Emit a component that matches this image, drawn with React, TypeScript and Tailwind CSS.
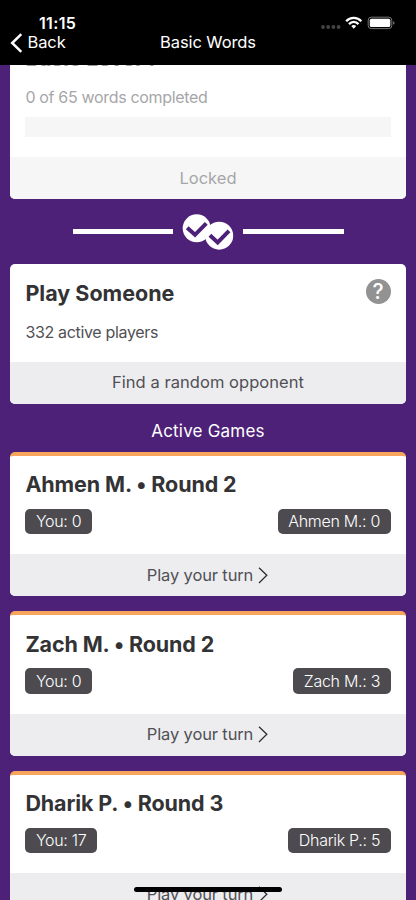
import React from 'react';

interface Game {
  opponent: string;
  round: number;
  yourScore: number;
  theirScore: number;
}

const games: Game[] = [
  { opponent: 'Ahmen M.', round: 2, yourScore: 0, theirScore: 0 },
  { opponent: 'Zach M.', round: 2, yourScore: 0, theirScore: 3 },
  { opponent: 'Dharik P.', round: 3, yourScore: 17, theirScore: 5 },
];

const StatusIcons = () => (
  <svg width="76" height="16" viewBox="0 0 76 16" className="mb-[-2px] block">
    <g fill="#444">
      <circle cx="3" cy="11" r="1.9" />
      <circle cx="8.2" cy="11" r="1.9" />
      <circle cx="13.4" cy="11" r="1.9" />
      <circle cx="18.6" cy="11" r="1.9" />
    </g>
    <g fill="none" stroke="#fff" strokeWidth="2.3">
      <path d="M26.2 5.2C30.3 0.8 37.2 0.8 41.3 5.2" />
      <path d="M29 8.1C31.7 5.2 35.8 5.2 38.5 8.1" />
    </g>
    <path d="M31.3 10C32.8 8.7 34.7 8.7 36.2 10L33.75 12.7Z" fill="#fff" />
    <rect x="48.2" y="1.2" width="23.6" height="11.4" rx="3" fill="none" stroke="#777" />
    <rect x="49.8" y="2.7" width="20.5" height="8.4" rx="1.6" fill="#fff" />
    <path d="M73.2 5.2V8.8Q74.5 8.3 74.5 7T73.2 5.2Z" fill="#888" />
  </svg>
);

const Header = () => (
  <header className="h-[64.5px] shrink-0 bg-black text-white">
    <div className="flex h-[30px] items-end justify-between pl-[39px] pr-[20px]">
      <span className="text-[16px] font-semibold leading-[14px] tracking-[0.35px]">11:15</span>
      <StatusIcons />
    </div>
    <div className="grid h-[25px] grid-cols-3 items-center text-[16.5px] leading-[20px]">
      <div className="flex items-center pl-[10px]">
        <svg width="14" height="20" viewBox="0 0 14 20" fill="none" stroke="#fff" strokeWidth="2.5">
          <path d="M11.3 1.2L2.2 10L11.3 18.8" />
        </svg>
        <span className="mb-[2px] ml-[3.5px] tracking-[-0.1px]">Back</span>
      </div>
      <span className="mb-[2px] text-center whitespace-nowrap tracking-[-0.1px]">Basic Words</span>
    </div>
  </header>
);

const Divider = () => (
  <div className="flex h-[65.3px] shrink-0 items-center justify-center">
    <div className="h-[5.5px] w-[100.5px] bg-white" />
    <svg width="70" height="38" viewBox="0 0 70 38">
      <circle cx="23.7" cy="15.3" r="14" fill="#fff" />
      <circle cx="46.2" cy="22.7" r="14" fill="#fff" />
      <g fill="none" stroke="#4e2179" strokeWidth="4">
        <path d="M14.2 14.7L22 21.8L33.3 10.3" />
        <path d="M36.9 22.3L44.7 29.4L56 17.9" />
      </g>
    </svg>
    <div className="h-[5.5px] w-[100.5px] bg-white" />
  </div>
);

const Score = ({ name, score }: { name: string; score: number }) => (
  <span className="flex h-[25.5px] items-center rounded-[5px] bg-[#4d4b50] px-[10.5px] text-[16px] font-light leading-none tracking-[-0.3px] text-white">
    {name}: {score}
  </span>
);

const GameCard = ({ game }: { game: Game }) => (
  <section className="h-[144.6px] shrink-0 overflow-hidden rounded-[5px] border-t-4 border-[#f7a45d] bg-white">
    <div className="h-[98.5px] px-[15px] pt-[14.5px]">
      <h2 className="text-[21.5px] font-bold leading-[28px] tracking-[-0.12px] text-[#333336]">
        {game.opponent} • Round {game.round}
      </h2>
      <div className="mt-[10.5px] flex justify-between">
        <Score name="You" score={game.yourScore} />
        <Score name={game.opponent} score={game.theirScore} />
      </div>
    </div>
    <div className="flex h-[42.1px] items-center justify-center bg-[#ededef] pr-[1px] text-[16.5px] tracking-[-0.13px] text-[#505055]">
      Play your turn
      <svg width="10" height="17" viewBox="0 0 10 17" className="ml-[5px]" fill="none" stroke="#2d2d30" strokeWidth="1.3">
        <path d="M1 0.7L8.8 8.3L1 16" />
      </svg>
    </div>
  </section>
);

const App = () => {
  return (
    <div className="relative flex h-[900px] w-[416px] flex-col overflow-hidden bg-[#4e2179] font-['Inter',sans-serif]">
      <Header />
      <main className="flex min-h-0 flex-1 flex-col overflow-hidden px-[10.4px]">
        <section className="h-[134.5px] shrink-0 overflow-hidden rounded-b-[5px] bg-white">
          <div className="flex h-[92.5px] flex-col px-[15px]">
            <h2 className="-mt-[20px] text-[21px] font-bold leading-[28px] text-[#99999b]">Basic Level 1</h2>
            <p className="mt-[13px] text-[16px] leading-[22px] tracking-[-0.33px] text-[#a6a6a9]">0 of 65 words completed</p>
            <div className="mt-[9.5px] h-[20px] bg-[#f6f6f6]" />
          </div>
          <div className="flex h-[42px] items-center justify-center bg-[#f6f6f6] text-[16.5px] text-[#a6a6a9]">
            Locked
          </div>
        </section>

        <Divider />

        <section className="h-[139.5px] shrink-0 overflow-hidden rounded-[5px] bg-white">
          <div className="h-[97.5px] px-[15px] pt-[15px]">
            <div className="flex items-start justify-between">
              <h2 className="text-[21.5px] font-bold leading-[28px] text-[#333336]">Play Someone</h2>
              <span className="flex size-[25px] items-center justify-center rounded-full bg-[#929292] text-[21px] font-medium leading-none text-white">
                ?
              </span>
            </div>
            <p className="mt-[14px] text-[16px] leading-[22px] tracking-[-0.33px] text-[#505055]">332 active players</p>
          </div>
          <div className="flex h-[42px] items-center justify-center bg-[#ededef] text-[16.5px] tracking-[0.05px] text-[#505055]">
            Find a random opponent
          </div>
        </section>

        <h3 className="h-[47.9px] shrink-0 pt-[14px] text-center text-[17px] leading-[26px] tracking-[0.2px] text-white">Active Games</h3>

        <div className="flex flex-col gap-[14.9px]">
          {games.map((game) => (
            <GameCard key={game.opponent} game={game} />
          ))}
        </div>
      </main>
      {/* home indicator */}
      <div className="absolute bottom-[8.5px] left-[134px] h-[5px] w-[148px] rounded-full bg-black" />
    </div>
  );
};

export default App;
